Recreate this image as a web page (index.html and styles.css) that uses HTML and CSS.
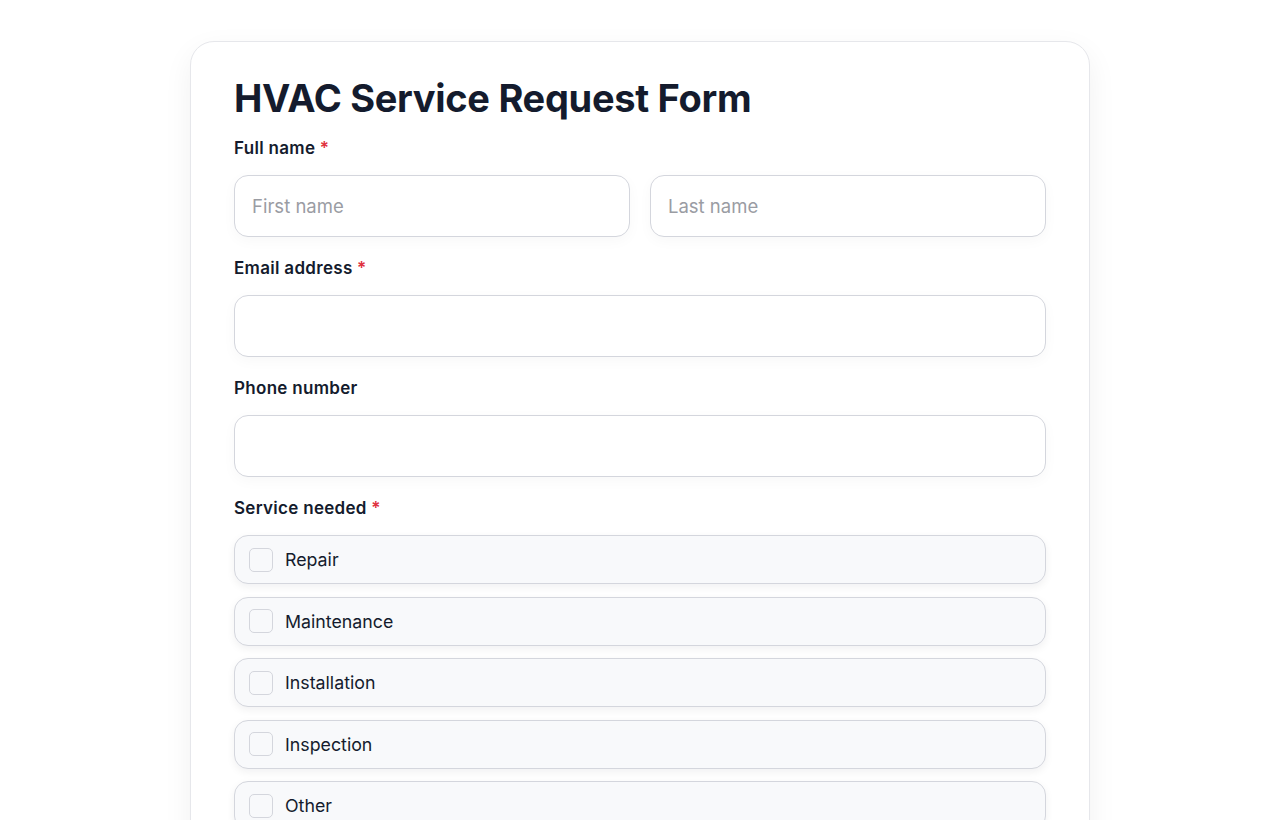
FILE: index.html
```html
<!DOCTYPE html>
<html lang="en">
<head>
    <meta charset="UTF-8">
    <meta name="viewport" content="width=device-width, initial-scale=1.0">
    <title>HVAC Service Request Form</title>
    <link rel="stylesheet" href="styles.css">
</head>
<body>
    <div class="card">
        <h1>HVAC Service Request Form</h1>

        <form>
            <!-- Name -->
            <div class="form-group">
                <label class="field-label">Full name <span class="req">*</span></label>
                <div class="name-row">
                    <input type="text" placeholder="First name">
                    <input type="text" placeholder="Last name">
                </div>
            </div>

            <div class="form-group">
                <label class="field-label" for="email">Email address <span class="req">*</span></label>
                <input type="email" id="email">
            </div>

            <div class="form-group">
                <label class="field-label" for="phone">Phone number</label>
                <input type="tel" id="phone">
            </div>

            <!-- Services -->
            <div class="form-group">
                <label class="field-label">Service needed <span class="req">*</span></label>
                <div class="options">
                    <label class="option"><input type="checkbox"><span>Repair</span></label>
                    <label class="option"><input type="checkbox"><span>Maintenance</span></label>
                    <label class="option"><input type="checkbox"><span>Installation</span></label>
                    <label class="option"><input type="checkbox"><span>Inspection</span></label>
                    <label class="option"><input type="checkbox"><span>Other</span></label>
                </div>
            </div>
        </form>
    </div>
</body>
</html>
```

FILE: styles.css
```css
* {
    margin: 0;
    padding: 0;
    box-sizing: border-box;
}

body {
    font-family: 'Inter', 'Noto Sans', sans-serif;
    background: #ffffff;
    color: #141b2d;
    padding: 41px 20px 40px;
}

.card {
    width: 900px;
    margin: 0 auto;
    background: white;
    border: 1px solid #e6e7eb;
    border-radius: 24px;
    box-shadow: 0 10px 30px rgba(17, 24, 39, 0.06);
    padding: 33px 43px 40px;
}

h1 {
    font-size: 38px;
    font-weight: 700;
    letter-spacing: -0.3px;
    line-height: 46px;
    margin-bottom: 17px;
    color: #141b2d;
}

.form-group {
    margin-bottom: 21px;
}

.field-label {
    display: block;
    font-size: 17px;
    font-weight: 600;
    letter-spacing: 0.3px;
    line-height: 20px;
    margin-bottom: 17px;
    color: #141b2d;
}

.req {
    color: #e0323f;
}

.name-row {
    display: grid;
    grid-template-columns: 1fr 1fr;
    gap: 20px;
}

input[type="text"],
input[type="email"],
input[type="tel"] {
    display: block;
    width: 100%;
    height: 62px;
    padding: 0 17px;
    border: 1px solid #d4d6dd;
    border-radius: 14px;
    font-family: inherit;
    font-size: 18.5px;
    color: #141b2d;
    background: white;
    box-shadow: 0 4px 14px rgba(17, 24, 39, 0.03);
}

input::placeholder {
    color: #9a9ca3;
}

.options {
    display: flex;
    flex-direction: column;
    gap: 12.5px;
    margin-top: 1px;
}

.option {
    display: flex;
    align-items: center;
    gap: 12px;
    height: 49px;
    padding: 0 14px;
    background: #f8f9fb;
    border: 1px solid #d4d6dd;
    border-radius: 14px;
    box-shadow: 0 3px 8px rgba(17, 24, 39, 0.06);
    font-size: 17.8px;
    color: #141b2d;
}

.option input {
    appearance: none;
    width: 24px;
    height: 24px;
    border: 1px solid #d4d6dd;
    border-radius: 5px;
    background: #f8f9fb;
    flex-shrink: 0;
}
```
